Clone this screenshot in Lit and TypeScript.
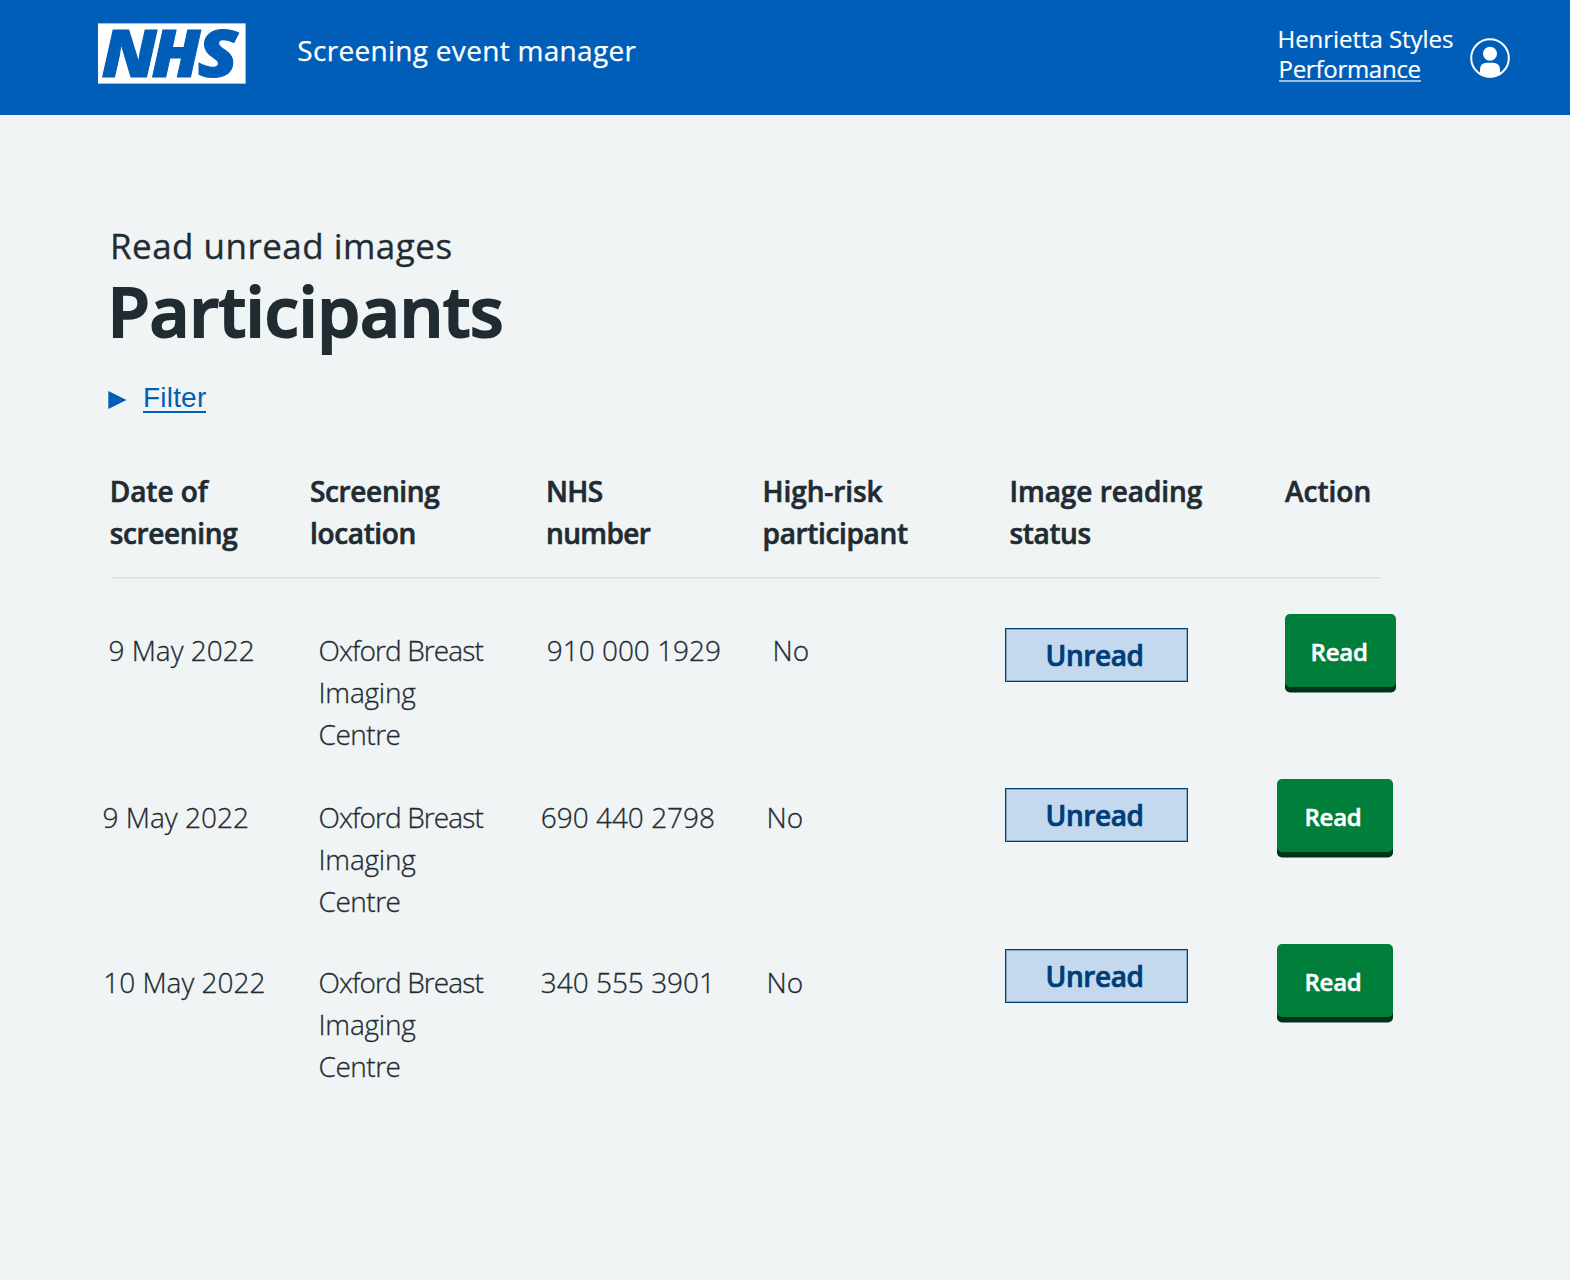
import { LitElement, html, css } from 'lit';
import { customElement, property } from 'lit/decorators.js';

interface Participant {
  date: string;
  location: string[];
  nhsNumber: string;
  highRisk: string;
  status: string;
}

const participants: Participant[] = [
  { date: '9 May 2022', location: ['Oxford Breast', 'Imaging', 'Centre'], nhsNumber: '910 000 1929', highRisk: 'No', status: 'Unread' },
  { date: '9 May 2022', location: ['Oxford Breast', 'Imaging', 'Centre'], nhsNumber: '690 440 2798', highRisk: 'No', status: 'Unread' },
  { date: '10 May 2022', location: ['Oxford Breast', 'Imaging', 'Centre'], nhsNumber: '340 555 3901', highRisk: 'No', status: 'Unread' },
];

const columns: string[][] = [
  ['Date of', 'screening'],
  ['Screening', 'location'],
  ['NHS', 'number'],
  ['High-risk', 'participant'],
  ['Image reading', 'status'],
  ['Action'],
];

@customElement('app-header')
export class AppHeader extends LitElement {
  static styles = css`
    :host {
      display: flex;
      box-sizing: border-box;
      height: 115px;
      padding-left: 98px;
      padding-right: 59px;
      background: #005eb8;
      color: #fff;
      font-family: 'Open Sans', sans-serif;
      white-space: nowrap;
    }
    .logo { flex: none; margin-top: 23px; width: 148px; height: 61px; overflow: visible; }
    .logo text { font: italic 800 66px 'Open Sans', sans-serif; fill: #005eb8; stroke: #005eb8; stroke-width: 1px; }
    .service { margin: 29px 0 0 51.3px; font-size: 28px; line-height: 42px; letter-spacing: 0.3px; -webkit-text-stroke: 0.25px #fff; }
    .user { margin: 24px 0 0 auto; width: 174.5px; font-size: 24px; line-height: 30px; -webkit-text-stroke: 0.2px #fff; }
    .name { display: block; letter-spacing: -0.05px; }
    .link { display: inline-block; margin-left: 1px; color: inherit; text-decoration: none; letter-spacing: -0.27px; height: 26px; border-bottom: 2px solid #99bfe3; }
    .avatar { flex: none; margin: 37px 0 0 17px; width: 42px; height: 42px; }
  `;
  render() {
    return html`
      <svg class="logo" viewBox="0 0 148 61" role="img" aria-label="NHS">
        <rect y="0.4" width="147.6" height="60.2" fill="#fff" />
        <text y="53.5" transform="translate(3.4 0) scale(1.06 1)">N</text>
        <text y="53.5" transform="translate(53.6 0) scale(1.04 1)">H</text>
        <text y="53.5" transform="translate(99.6 0) scale(1.12 1)">S</text>
      </svg>
      <div class="service">Screening event manager</div>
      <div class="user">
        <span class="name">Henrietta Styles</span>
        <a class="link">Performance</a>
      </div>
      <svg class="avatar" viewBox="0 0 42 42" fill="none">
        <clipPath id="disc"><circle cx="21" cy="21" r="19.5" /></clipPath>
        <circle cx="21" cy="21" r="18.8" stroke="#fff" stroke-width="2" />
        <circle cx="21" cy="16.7" r="7" fill="#fff" />
        <path d="M11 45V33q0-7.2 7.2-7.2h5.6q7.2 0 7.2 7.2v12z" fill="#fff" clip-path="url(#disc)" />
      </svg>
    `;
  }
}

@customElement('participant-table')
export class ParticipantTable extends LitElement {
  @property({ attribute: false }) rows: Participant[] = [];

  static styles = css`
    :host { display: block; color: #212b32; font-size: 28px; line-height: 42px; white-space: nowrap; }
    .grid { display: grid; grid-template-columns: 208px 230px 222px 243px 272px 119px; }
    .head { height: 107px; font-weight: 600; letter-spacing: -0.35px; -webkit-text-stroke: 0.6px #212b32; }
    .line { display: block; }
    .h0 { padding-left: 7.7px; }
    .h1 { padding-left: 0; }
    .h2 { padding-left: 6px; letter-spacing: -0.6px; }
    .h3 { padding-left: 0.6px; }
    .h4 { padding-left: 4.5px; }
    .h5 { padding-left: 8px; letter-spacing: 0; }
    .h0 .line:first-child, .h4 .line:first-child { letter-spacing: -0.05px; }
    .h3 .line:first-child { letter-spacing: -0.1px; }
    .rule { height: 1px; margin: 0 0 36px 9.4px; width: 1268.5px; background: #d8dde0; box-shadow: 0 1px 0 rgba(216, 221, 224, 0.4); }
    .row { height: 165px; font-weight: 300; -webkit-text-stroke: 0.3px #212b32; }
    .row > .text { padding-top: 16.5px; }
    .date { padding-left: 0.6px; letter-spacing: 0; }
    .location { padding-left: 8.5px; letter-spacing: -0.5px; }
    .location .line:first-child { letter-spacing: -0.9px; }
    .location .line:nth-child(2) { letter-spacing: -0.2px; }
    .number { padding-left: 0.7px; }
    .risk { padding-left: 4.5px; }
    .badge {
      display: flex;
      align-items: center;
      box-sizing: border-box;
      width: 183px;
      height: 54px;
      margin: 9.3px 0 0 0.4px;
      padding-left: 39.2px;
      border: 1px solid #003d78;
      box-shadow: inset 0 0 0 1px rgba(0, 61, 120, 0.3);
      background: #c5d9ee;
      color: #003d78;
      font-weight: 600;
      letter-spacing: -0.4px;
      -webkit-text-stroke: 0.7px #003d78;
    }
    .button {
      display: block;
      box-sizing: border-box;
      width: 116px;
      height: 73px;
      padding: 0 4px 0 0;
      border: 0;
      border-radius: 5px;
      background: #007f3b;
      box-shadow: 0 5.5px 0 #003317;
      color: #fff;
      font: 600 24px/76px 'Open Sans', sans-serif;
      letter-spacing: -0.25px;
      text-align: center;
      -webkit-text-stroke: 0.5px #fff;
    }
    .row0 > .text { padding-top: 15px; }
    .row0 .date { padding-left: 6.4px; }
    .row0 .number { padding-left: 6.7px; }
    .row0 .risk { padding-left: 10.5px; }
    .row0 .badge { margin-top: 14px; }
    .row0 .button { width: 111px; margin-left: 7.6px; padding-right: 2px; }
    .row2 .date { padding-left: 1.2px; }
    .row2 .badge { margin-top: 5px; }
  `;
  render() {
    return html`
      <div class="grid head">
        ${columns.map((lines, i) => html`<div class="h${i}">${lines.map((l) => html`<span class="line">${l}</span>`)}</div>`)}
      </div>
      <div class="rule"></div>
      ${this.rows.map(
        (r, i) => html`<div class="grid row row${i}">
          <div class="text date">${r.date}</div>
          <div class="text location">${r.location.map((l) => html`<span class="line">${l}</span>`)}</div>
          <div class="text number">${r.nhsNumber}</div>
          <div class="text risk">${r.highRisk}</div>
          <div><span class="badge">${r.status}</span></div>
          <div><button class="button">Read</button></div>
        </div>`
      )}
    `;
  }
}

@customElement('app-root')
export class AppRoot extends LitElement {
  static styles = css`
    :host {
      display: block;
      min-height: 1280px;
      background: #f0f4f5;
      color: #212b32;
      font-family: 'Open Sans', sans-serif;
    }
    main { padding: 106px 0 0 102px; }
    .caption { display: block; padding-left: 8px; font-size: 35px; line-height: 50px; letter-spacing: 0.47px; -webkit-text-stroke: 0.3px #212b32; }
    h1 { margin: 0; padding-left: 5.5px; font-size: 69px; font-weight: 600; line-height: 79px; letter-spacing: -0.35px; -webkit-text-stroke: 2px #212b32; }
    .filter { display: flex; align-items: flex-start; margin: 32px 0 0 6px; color: #005eb8; font: 28px 'Liberation Sans', Arial, sans-serif; }
    .arrow { width: 19px; height: 18px; margin-top: 9px; }
    .filter a { height: 29px; line-height: 32px; margin-left: 16px; letter-spacing: 0.2px; border-bottom: 2px solid #005eb8; }
    participant-table { margin-top: 57px; }
  `;
  render() {
    return html`
      <app-header></app-header>
      <main>
        <span class="caption">Read unread images</span>
        <h1>Participants</h1>
        <div class="filter">
          <svg class="arrow" viewBox="0 0 19 18"><path d="M.3 0 18.5 9 .3 18z" fill="#005eb8" /></svg>
          <a>Filter</a>
        </div>
        <participant-table .rows=${participants}></participant-table>
      </main>
    `;
  }
}
